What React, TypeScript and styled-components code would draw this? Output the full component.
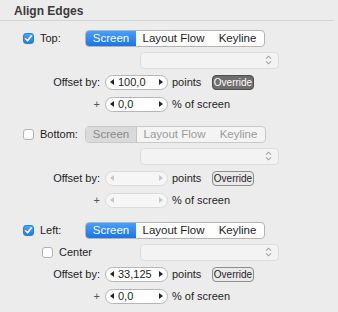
import React from 'react';
import styled, { createGlobalStyle, css } from 'styled-components';

const GlobalStyle = createGlobalStyle`
  html, body {
    margin: 0;
    padding: 0;
    background: #ececec;
  }
  body {
    font-family: "Liberation Sans", Arial, sans-serif;
    color: #1e1e1e;
  }
`;

type EdgeConfig = {
  label: string;
  enabled: boolean;
  offset: string;
  percent: string;
  override: 'dark' | 'light';
  center?: boolean;
};

const edges: EdgeConfig[] = [
  { label: 'Top:', enabled: true, offset: '100,0', percent: '0,0', override: 'dark' },
  { label: 'Bottom:', enabled: false, offset: '', percent: '', override: 'light' },
  { label: 'Left:', enabled: true, offset: '33,125', percent: '0,0', override: 'light', center: true },
];

const segments = [
  { name: 'Screen', width: 50 },
  { name: 'Layout Flow', width: 75 },
  { name: 'Keyline', width: 53 },
];

const Checkbox: React.FC<{ checked: boolean }> = ({ checked }) => (
  <StyledCheck checked={checked}>
    {checked && (
      <svg width="9" height="9" viewBox="0 0 9 9">
        <path d="M1.6 4.8 L3.6 6.8 L7.4 1.8" fill="none" stroke="#fff" strokeWidth="1.6" strokeLinecap="round" strokeLinejoin="round" />
      </svg>
    )}
  </StyledCheck>
);

const Stepper: React.FC<{ value: string; disabled: boolean }> = ({ value, disabled }) => (
  <StyledStepper disabled={disabled}>
    <Arrow disabled={disabled}>
      <svg width="4" height="6" viewBox="0 0 4 6"><path d="M4 0 L0 3 L4 6 Z" /></svg>
    </Arrow>
    <StepperValue>{value}</StepperValue>
    <Arrow disabled={disabled}>
      <svg width="4" height="6" viewBox="0 0 4 6"><path d="M0 0 L4 3 L0 6 Z" /></svg>
    </Arrow>
  </StyledStepper>
);

const Popup: React.FC = () => (
  <StyledPopup>
    <svg width="7" height="10" viewBox="0 0 7 10">
      <path d="M1 3.6 L3.5 1.2 L6 3.6 M1 6.4 L3.5 8.8 L6 6.4" fill="none" stroke="#a3a3a3" strokeWidth="1.1" />
    </svg>
  </StyledPopup>
);

const EdgeSection: React.FC<{ edge: EdgeConfig }> = ({ edge }) => (
  <Section>
    <Row>
      <CheckSlot>
        <Checkbox checked={edge.enabled} />
        <EdgeLabel>{edge.label}</EdgeLabel>
      </CheckSlot>
      <Segmented disabled={!edge.enabled}>
        {segments.map((s, i) => (
          <Segment key={s.name} selected={i === 0} disabled={!edge.enabled} style={{ width: s.width }}>
            {s.name}
          </Segment>
        ))}
      </Segmented>
    </Row>
    <Row>
      <PopupSlot>
        {edge.center && (
          <>
            <Checkbox checked={false} />
            <CenterLabel>Center</CenterLabel>
          </>
        )}
      </PopupSlot>
      <Popup />
    </Row>
    <Row>
      <FieldLabel>Offset by:</FieldLabel>
      <Stepper value={edge.offset} disabled={!edge.enabled} />
      <Unit>points</Unit>
      <OverrideButton variant={edge.override}>Override</OverrideButton>
    </Row>
    <Row>
      <FieldLabel plus>+</FieldLabel>
      <Stepper value={edge.percent} disabled={!edge.enabled} />
      <Unit>% of screen</Unit>
    </Row>
  </Section>
);

const App: React.FC = () => (
  <>
    <GlobalStyle />
    <Panel>
      <Header>Align Edges</Header>
      <Sections>
        {edges.map((e) => (
          <EdgeSection key={e.label} edge={e} />
        ))}
      </Sections>
    </Panel>
  </>
);

const Panel = styled.div`
  width: 338px;
  height: 312px;
  background: #ececec;
`;

const Header = styled.div`
  height: 20px;
  margin-right: 4px;
  padding-left: 14px;
  border-bottom: 1px solid #d4d4d4;
  font-size: 12px;
  font-weight: bold;
  line-height: 22px;
  color: #3a3a3a;
`;

const Sections = styled.div`
  display: flex;
  flex-direction: column;
  gap: 8px;
  padding-top: 6px;
`;

const Section = styled.div`
  display: flex;
  flex-direction: column;
`;

const Row = styled.div`
  display: flex;
  align-items: center;
  height: 22px;
  font-size: 11px;
`;

const CheckSlot = styled.div`
  display: flex;
  align-items: center;
  width: 62px;
  padding-left: 23px;
`;

const EdgeLabel = styled.span`
  margin-left: 6px;
`;

const PopupSlot = styled.div`
  display: flex;
  align-items: center;
  width: 98px;
  padding-left: 42px;
`;

const CenterLabel = styled.span`
  margin-left: 6px;
`;

const StyledCheck = styled.div<{ checked: boolean }>`
  width: 11px;
  height: 11px;
  border-radius: 3px;
  box-sizing: border-box;
  display: flex;
  align-items: center;
  justify-content: center;
  ${({ checked }) =>
    checked
      ? css`
          background: linear-gradient(#4ea3fb, #1c78f0);
          border: 1px solid #2a7de6;
        `
      : css`
          background: #fff;
          border: 1px solid #b2b2b2;
        `}
`;

const Segmented = styled.div<{ disabled: boolean }>`
  display: flex;
  height: 17px;
  box-sizing: border-box;
  border-radius: 4px;
  overflow: hidden;
  background: ${({ disabled }) => (disabled ? '#f4f4f4' : '#fff')};
  border: 1px solid ${({ disabled }) => (disabled ? '#c9c9c9' : '#b4b4b4')};
`;

const Segment = styled.div<{ selected: boolean; disabled: boolean }>`
  display: flex;
  align-items: center;
  justify-content: center;
  font-size: 11.5px;
  color: ${({ disabled }) => (disabled ? '#9b9b9b' : '#1e1e1e')};
  ${({ selected, disabled }) =>
    selected &&
    (disabled
      ? css`
          background: #dadada;
          color: #8a8a8a;
          border-right: 1px solid #c4c4c4;
        `
      : css`
          background: linear-gradient(#4a9ff9, #1b74ea);
          color: #fff;
        `)}
`;

const StyledPopup = styled.div`
  margin-left: 0;
  width: 139px;
  height: 17px;
  box-sizing: border-box;
  border: 1px solid #dcdcdc;
  border-radius: 4px;
  background: #f3f3f3;
  display: flex;
  align-items: center;
  justify-content: flex-end;
  padding-right: 6px;
`;

const FieldLabel = styled.span<{ plus?: boolean }>`
  width: 100px;
  text-align: right;
  margin-right: 5px;
  color: ${({ plus }) => (plus ? '#555' : '#1e1e1e')};
`;

const StyledStepper = styled.div<{ disabled: boolean }>`
  width: 63px;
  height: 15px;
  box-sizing: border-box;
  border-radius: 8px;
  display: flex;
  align-items: center;
  padding: 0 4px;
  background: ${({ disabled }) => (disabled ? '#f6f6f6' : '#fff')};
  border: 1px solid ${({ disabled }) => (disabled ? '#dadada' : '#b6b6b6')};
`;

const Arrow = styled.span<{ disabled: boolean }>`
  display: flex;
  fill: ${({ disabled }) => (disabled ? '#c8c8c8' : '#222')};
`;

const StepperValue = styled.span`
  flex: 1;
  padding-left: 4px;
  font-size: 11px;
`;

const Unit = styled.span`
  margin-left: 4px;
  width: 40px;
  white-space: nowrap;
`;

const OverrideButton = styled.div<{ variant: 'dark' | 'light' }>`
  width: 42px;
  height: 15px;
  box-sizing: border-box;
  border-radius: 4px;
  display: flex;
  align-items: center;
  justify-content: center;
  font-size: 10px;
  ${({ variant }) =>
    variant === 'dark'
      ? css`
          background: #6e6e6e;
          border: 1px solid #4f4f4f;
          color: #fff;
        `
      : css`
          background: #e9e9e9;
          border: 1px solid #8e8e8e;
          color: #1e1e1e;
        `}
`;

export default App;
